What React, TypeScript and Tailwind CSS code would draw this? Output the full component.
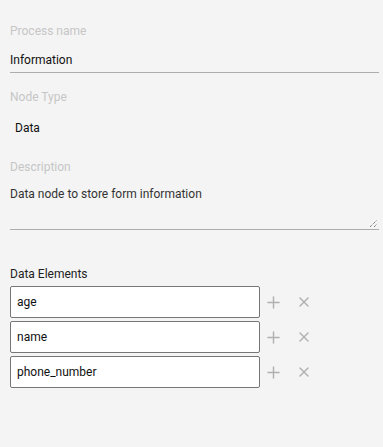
import { Plus, X } from 'lucide-react';

const elements = ['age', 'name', 'phone_number'];

export default function App() {
  return (
    <div className="w-full h-[447px] bg-[#f4f4f4] px-[10px] pt-[24px] text-[12px] font-['Roboto',sans-serif]">
      <div className="h-[15px] leading-[15px] text-[#c6c6c6]">Process name</div>
      <div className="mt-[14px] pb-[4px] border-b border-[#adadad] w-[369px]">
        <div className="h-[15px] leading-[15px] text-[#111]">Information</div>
      </div>

      <div className="mt-[17px] h-[15px] leading-[15px] text-[#c6c6c6]">Node Type</div>
      <div className="mt-[16px] pl-[5px] h-[15px] leading-[15px] text-[#111]">Data</div>

      <div className="mt-[24px] h-[15px] leading-[15px] text-[#c6c6c6]">Description</div>
      <div className="relative mt-[12px] h-[43px] w-[369px] border-b border-[#adadad]">
        <div className="h-[15px] leading-[15px] text-[#333]">Data node to store form information</div>
        <svg className="absolute right-[1px] bottom-[1px]" width="9" height="9" viewBox="0 0 9 9">
          <path d="M1 8 L8 1 M5 8 L8 5" stroke="#555" strokeWidth="1" strokeDasharray="1 1" fill="none" />
        </svg>
      </div>

      <div className="mt-[37px] h-[15px] leading-[15px] text-[#222]">Data Elements</div>
      <div className="mt-[4px] flex flex-col gap-[3px]">
        {elements.map((el) => (
          <div key={el} className="flex items-center">
            <div className="w-[250px] h-[32px] bg-white border border-[#767676] rounded-[2px] px-[6px] flex items-center text-[#111]">
              {el}
            </div>
            <Plus className="ml-[4px] text-[#b0b0b0]" size={19} strokeWidth={1.8} />
            <X className="ml-[13px] text-[#b0b0b0]" size={16} strokeWidth={2.2} />
          </div>
        ))}
      </div>
    </div>
  );
}
